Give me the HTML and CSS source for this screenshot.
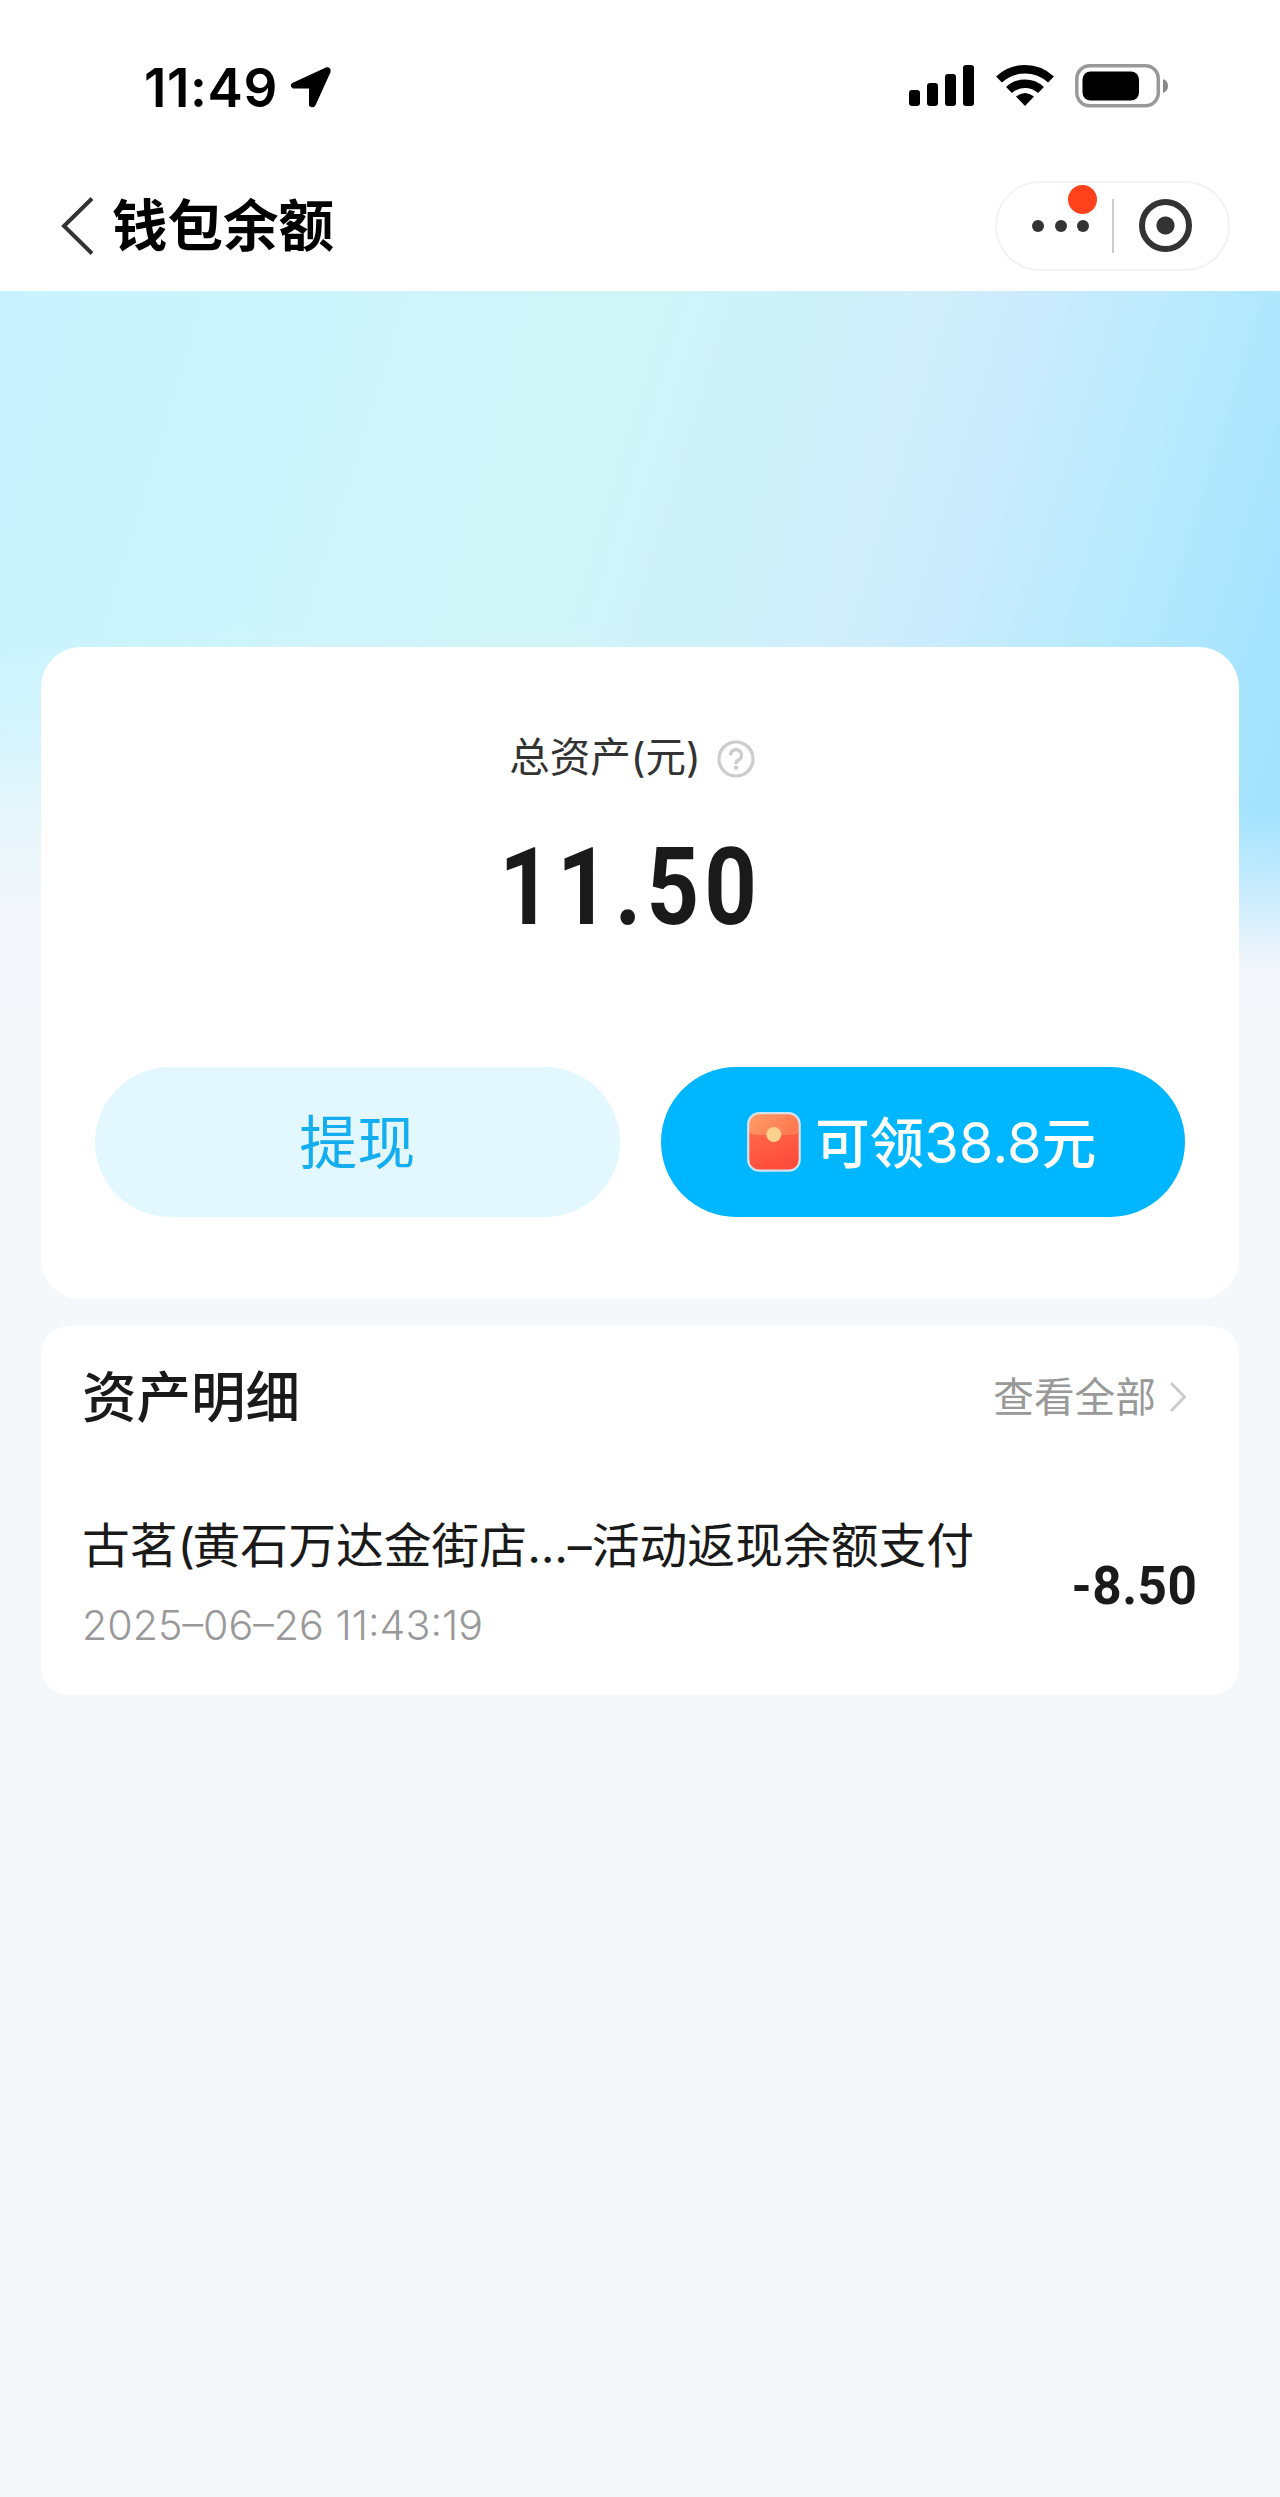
FILE: index.html
```html
<!DOCTYPE html>
<html lang="zh-CN">
<head>
<meta charset="utf-8">
<title>钱包余额</title>
<link rel="stylesheet" href="styles.css">
</head>
<body>
<header class="top">
  <div class="status">
    <div class="status-left">
      <span class="time">11:49</span>
      <svg class="loc" width="42" height="42" viewBox="0 0 42 42"><path d="M3.5 18 36 3Q40 2 39 6L24.500 38Q23 41 20.500 39V21H3.500Q1 19.500 3.500 18Z" stroke="#000" stroke-width="3" stroke-linejoin="round"/></svg>
    </div>
    <div class="status-right">
      <svg width="65" height="42" viewBox="0 0 65 42"><rect y="26" width="11" height="16" rx="3"/><rect x="18" y="19" width="11" height="23" rx="3"/><rect x="36" y="10" width="11" height="32" rx="3"/><rect x="54" y="1" width="11" height="41" rx="3"/></svg>
      <svg class="wifi" width="58" height="42" viewBox="0 0 58 42"><g fill="none" stroke="#000" stroke-width="8.500"><path d="M3 15.500A38 38 0 0 1 55 15.500"/><path d="M13 26A23.500 23.500 0 0 1 45 26"/></g><path d="M20 32.500Q29 25.500 38 32.500L29 42Z"/></svg>
      <svg class="battery" width="94" height="44" viewBox="0 0 94 44"><rect x="1.800" y="1.800" width="81.500" height="40" rx="13" fill="#fff" stroke="#999" stroke-width="3.500"/><rect x="7.500" y="7.500" width="56.500" height="29" rx="8"/><path d="M88 15Q93 17 93 22T88 29Z" fill="#888"/></svg>
    </div>
  </div>
  <div class="nav">
    <div class="nav-title">
      <svg width="34" height="58" viewBox="0 0 34 58"><path d="M32 1.500 4 29 32 56.500" fill="none" stroke="#333" stroke-width="4"/></svg>
      <h1>钱包余额</h1>
    </div>
    <div class="capsule">
      <i class="dots"><b></b><b></b><b></b></i>
      <i class="divider"></i>
      <i class="target"></i>
      <i class="badge"></i>
    </div>
  </div>
</header>
<main class="page">
  <section class="card balance">
    <div class="label"><span>总资产(元)</span>
      <svg width="38" height="38" viewBox="0 0 38 38" fill="none" stroke="#ccc" stroke-width="3.200"><circle cx="19" cy="19" r="17"/><path d="M13.500 15.500A5.500 5.500 0 1 1 21.500 20Q19 21.300 19 24" stroke-width="3.500"/><circle cx="19" cy="27.500" r="2.200" fill="#ccc" stroke="none"/></svg>
    </div>
    <div class="total">11.50</div>
    <div class="actions">
      <button class="btn light"><span>提现</span></button>
      <button class="btn solid">
        <svg width="54" height="60" viewBox="0 0 54 60"><defs><linearGradient id="env" x1="0" y1="0" x2="0.300" y2="1"><stop offset="0" stop-color="#ff7550"/><stop offset="1" stop-color="#ff4d3c"/></linearGradient><linearGradient id="flap" x1="0" y1="0" x2="1" y2="0.400"><stop offset="0" stop-color="#ff9d68"/><stop offset="1" stop-color="#ff7a50"/></linearGradient></defs><rect x="1.200" y="1.200" width="51.500" height="57.500" rx="11" fill="url(#env)"/><path d="M2 12Q2 2 12 2H42Q52 2 52 12V17Q52 23 43 23H11Q2 23 2 17Z" fill="url(#flap)"/><rect x="1.200" y="1.200" width="51.500" height="57.500" rx="11" fill="none" stroke="#d3e2ec" stroke-width="2.200"/><circle cx="26.800" cy="22.500" r="7.500" fill="#fbd28b"/></svg>
        <span>可领<span class="num">38.8</span>元</span>
      </button>
    </div>
  </section>
  <section class="card detail">
    <div class="detail-head">
      <h2>资产明细</h2>
      <a class="more"><span>查看全部</span><svg width="18" height="32" viewBox="0 0 18 32"><path d="M2 2 15.500 16 2 30" fill="none" stroke="#ccc" stroke-width="3"/></svg></a>
    </div>
    <div class="row">
      <div class="row-text">
        <div class="name">古茗<span class="paren">(</span>黄石万达金街店<span class="dots-text">...</span>–活动返现余额支付</div>
        <div class="date">2025–06–26 11:43:19</div>
      </div>
      <div class="amount">-8.50</div>
    </div>
  </section>
</main>
</body>
</html>
```
FILE: styles.css
```css
* { box-sizing: border-box; }
body { margin: 0; background: #f4f8fb; color: #1a1a1a; font-family: Inter, "Noto Sans CJK SC", sans-serif; }
svg { display: block; flex: none; }
h1, h2 { margin: 0; white-space: nowrap; }
.top { height: 291px; background: #fff; }
.status { height: 172px; padding: 63px 111px 0 144px; display: flex; justify-content: space-between; align-items: flex-start; }
.status-left, .status-right { display: flex; align-items: flex-start; }
.time { font-size: 53px; font-weight: 600; line-height: 50px; color: #000; letter-spacing: 0.6px; }
.loc { margin: 3px 0 0 12px; }
.status-right { padding-top: 1px; }
.wifi { margin-left: 22px; }
.battery { margin-left: 21px; }
.nav { height: 107px; padding: 0 50px 0 60px; display: flex; justify-content: space-between; align-items: center; }
.nav-title { display: flex; align-items: center; gap: 18px; }
.nav h1 { padding-top: 1px; font-size: 55.500px; line-height: 80px; font-weight: 700; color: #000; }
.capsule { position: relative; width: 235px; height: 90px; border: 2px solid #f3f3f3; border-radius: 45px; display: flex; align-items: center; padding-left: 35px; }
.dots { display: flex; gap: 10.500px; }
.dots b { width: 12px; height: 12px; border-radius: 50%; background: #333; }
.divider { width: 1.500px; height: 54px; background: #ccc; margin-left: 23px; }
.target { width: 53px; height: 53px; margin-left: 25px; border: 6px solid #333; border-radius: 50%; background: radial-gradient(circle, #333 8.500px, transparent 9.500px); }
.badge { position: absolute; left: 71px; top: 2px; width: 29px; height: 29px; border-radius: 50%; background: #ff411c; }
.page { height: 2206px; padding: 356px 41px 0; background:
  linear-gradient(to bottom, rgba(244,247,251,0) 330px, rgba(244,247,251,.2) 430px, rgba(244,247,251,.65) 520px, #f4f7fb 630px) left top / 50% 720px no-repeat,
  linear-gradient(to bottom, rgba(244,247,252,0) 520px, rgba(244,247,252,.4) 590px, #f4f7fb 680px) right top / 50% 720px no-repeat,
  linear-gradient(107deg, #c8f3fe 0%, #ccf4fc 20%, #d0f5f8 42%, #cdf1f9 54%, #d0effa 62%, #caebfe 70%, #b9eafd 80%, #a7e4fe 91%, #9fe1fe 100%) left top / 100% 720px no-repeat, #f4f8fb; }
.card { background: #fff; }
.balance { height: 652px; border-radius: 40px; padding: 83px 54px 0; }
.label { display: flex; justify-content: center; align-items: center; gap: 16px; height: 56px; padding-right: 16px; font-size: 40.500px; line-height: 50px; color: #333; }
.label svg { margin-top: 2px; }
.total { margin-top: 46px; height: 110px; padding-right: 22px; text-align: center; font: 700 108px/110px Roboto, sans-serif; transform: scaleX(.85); letter-spacing: 6px; }
.actions { display: grid; grid-template-columns: 1fr 1fr; gap: 41px; margin-top: 125px; }
.btn { height: 150px; border: 0; border-radius: 75px; display: flex; align-items: center; justify-content: center; gap: 14px; padding: 0; font-family: inherit; white-space: nowrap; }
.btn > span { padding-bottom: 6px; }
.light { background: #e3f7fe; color: #14aef0; font-size: 58px; }
.solid { background: #00b6ff; color: #fff; font-size: 54.500px; font-weight: 500; padding-right: 2px; }
.num { font-weight: 400; font-size: 56px; }
.detail { margin-top: 27px; height: 369px; border-radius: 28px; padding: 31px 42px 0 41px; }
.detail-head { display: flex; justify-content: space-between; align-items: center; height: 80px; padding-right: 10px; }
.detail h2 { font-size: 54.500px; font-weight: 500; line-height: 80px; }
.more { display: flex; align-items: center; gap: 13px; font-size: 40.700px; color: #999; }
.more span { padding-bottom: 5px; }
.row { display: flex; justify-content: space-between; align-items: center; margin-top: 74px; }
.name { font-size: 47.800px; line-height: 70px; white-space: nowrap; }
.paren { letter-spacing: -2.500px; }
.dots-text { letter-spacing: -0.200px; }
.date { margin-top: 19px; font-size: 41.200px; line-height: 50px; font-weight: 300; color: #999; white-space: nowrap; }
.amount { padding-top: 10px; font: 700 54px/60px Roboto, sans-serif; transform: scaleX(.95); transform-origin: right; letter-spacing: .5px; }
```
